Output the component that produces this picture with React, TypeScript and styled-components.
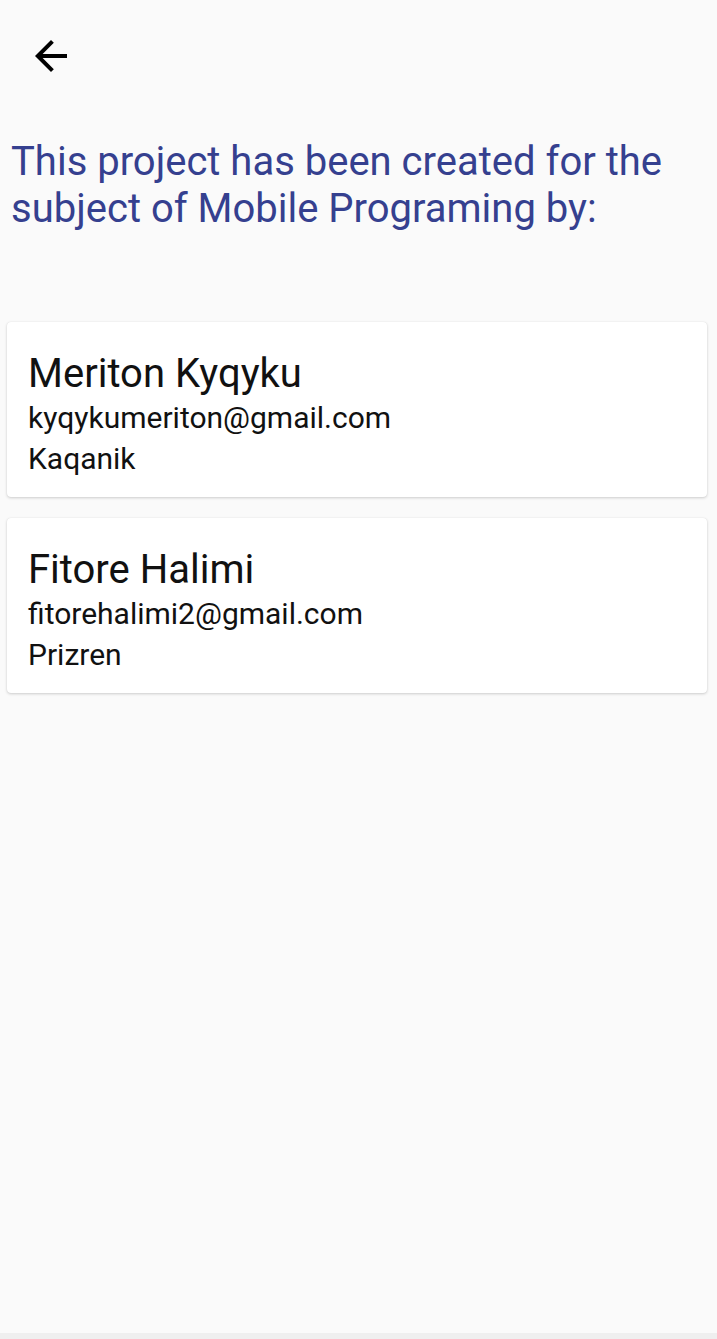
import React from "react";
import styled, { createGlobalStyle } from "styled-components";

const Global = createGlobalStyle`
  html, body { margin: 0; padding: 0; background: #fafafa; }
  body { font-family: Roboto, "Noto Sans", "Liberation Sans", sans-serif; }
`;

const Screen = styled.div`
  min-height: 1339px;
  background: #fafafa;
  display: flex;
  flex-direction: column;
  border-bottom: 6px solid #efefef;
  box-sizing: border-box;
`;

const Header = styled.header`
  height: 112px;
  display: flex;
  align-items: center;
  padding-left: 27px;
`;

const BackButton = styled.button`
  border: none;
  background: transparent;
  padding: 0;
  width: 48px;
  height: 48px;
  display: flex;
  color: #000;
  cursor: pointer;
`;

const Title = styled.h1`
  margin: 26px 10px 0 11px;
  font-weight: 400;
  font-size: 40px;
  line-height: 47px;
  color: #35408f;
  letter-spacing: 0;
`;

const List = styled.div`
  margin-top: 90px;
  padding: 0 10px 0 7px;
  display: flex;
  flex-direction: column;
  gap: 21px;
`;

const Card = styled.div`
  background: #fff;
  border-radius: 4px;
  box-shadow: 0 1px 3px rgba(0, 0, 0, 0.18), 0 0 1px rgba(0, 0, 0, 0.1);
  padding: 28px 21px 18px;
  display: flex;
  flex-direction: column;
  color: #111;
`;

const Name = styled.div`
  font-size: 40px;
  line-height: 47px;
`;

const Detail = styled.div`
  font-size: 30px;
  line-height: 41px;
`;

const people = [
  { name: "Meriton Kyqyku", email: "kyqykumeriton@gmail.com", city: "Kaqanik" },
  { name: "Fitore Halimi", email: "fitorehalimi2@gmail.com", city: "Prizren" },
];

export default function App() {
  return (
    <Screen>
      <Global />
      <Header>
        <BackButton aria-label="Back">
          <svg width="48" height="48" viewBox="0 0 24 24" fill="currentColor">
            <path d="M20 11H7.83l5.59-5.59L12 4l-8 8 8 8 1.41-1.41L7.83 13H20v-2z" />
          </svg>
        </BackButton>
      </Header>
      <Title>This project has been created for the subject of Mobile Programing by:</Title>
      <List>
        {people.map((p) => (
          <Card key={p.email}>
            <Name>{p.name}</Name>
            <Detail>{p.email}</Detail>
            <Detail>{p.city}</Detail>
          </Card>
        ))}
      </List>
    </Screen>
  );
}
